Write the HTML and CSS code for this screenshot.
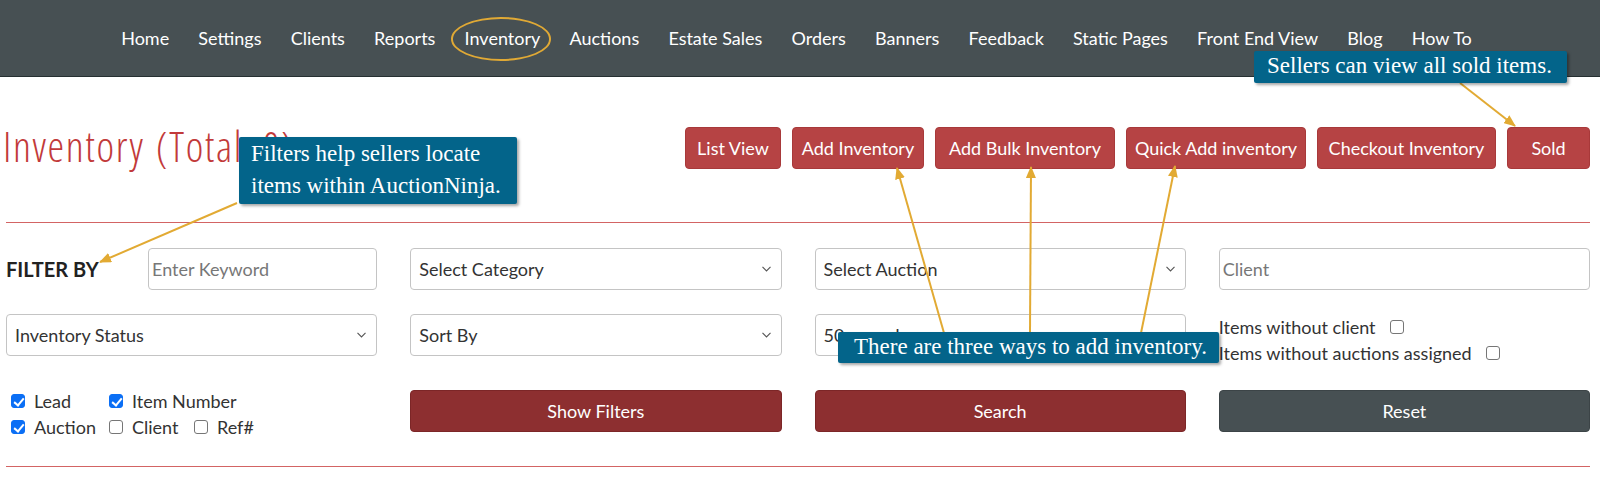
FILE: index.html
```html
<!DOCTYPE html>
<html lang="en">
<head>
<meta charset="utf-8">
<title>Inventory</title>
<link rel="stylesheet" href="styles.css">
</head>
<body>
<div class="page">
  <nav class="topnav">
    <a class="navlink">Home</a>
    <a class="navlink">Settings</a>
    <a class="navlink">Clients</a>
    <a class="navlink">Reports</a>
    <a class="navlink circled">Inventory</a>
    <a class="navlink">Auctions</a>
    <a class="navlink">Estate Sales</a>
    <a class="navlink">Orders</a>
    <a class="navlink">Banners</a>
    <a class="navlink">Feedback</a>
    <a class="navlink">Static Pages</a>
    <a class="navlink">Front End View</a>
    <a class="navlink">Blog</a>
    <a class="navlink">How To</a>
  </nav>

  <main class="content">
    <header class="page-head">
      <h1 class="title">Inventory <span class="total">(Total: 0)</span></h1>
      <div class="actions">
        <button class="btn btn-red btn-list">List View</button>
        <button class="btn btn-red btn-add">Add Inventory</button>
        <button class="btn btn-red btn-wide">Add Bulk Inventory</button>
        <button class="btn btn-red btn-wide">Quick Add inventory</button>
        <button class="btn btn-red btn-checkout">Checkout Inventory</button>
        <button class="btn btn-red btn-sold">Sold</button>
      </div>
    </header>
    <hr class="divider">

    <section class="filters">
      <div class="frow">
        <div class="cell-label">
          <span class="filter-label">FILTER BY</span>
          <input class="field field-input" type="text" placeholder="Enter Keyword">
        </div>
        <div class="select-wrap">
          <select class="field field-select"><option>Select Category</option></select>
          <svg class="chev" viewBox="0 0 9 6"><path d="M0.5 0.8 L4.5 5 L8.5 0.8" fill="none" stroke="#555" stroke-width="1.1"/></svg>
        </div>
        <div class="select-wrap">
          <select class="field field-select"><option>Select Auction</option></select>
          <svg class="chev" viewBox="0 0 9 6"><path d="M0.5 0.8 L4.5 5 L8.5 0.8" fill="none" stroke="#555" stroke-width="1.1"/></svg>
        </div>
        <input class="field field-input" type="text" placeholder="Client">
      </div>

      <div class="frow">
        <div class="select-wrap">
          <select class="field field-select"><option>Inventory Status</option></select>
          <svg class="chev" viewBox="0 0 9 6"><path d="M0.5 0.8 L4.5 5 L8.5 0.8" fill="none" stroke="#555" stroke-width="1.1"/></svg>
        </div>
        <div class="select-wrap">
          <select class="field field-select"><option>Sort By</option></select>
          <svg class="chev" viewBox="0 0 9 6"><path d="M0.5 0.8 L4.5 5 L8.5 0.8" fill="none" stroke="#555" stroke-width="1.1"/></svg>
        </div>
        <div class="select-wrap">
          <select class="field field-select"><option>50 records</option></select>
          <svg class="chev" viewBox="0 0 9 6"><path d="M0.5 0.8 L4.5 5 L8.5 0.8" fill="none" stroke="#555" stroke-width="1.1"/></svg>
        </div>
        <div class="toggles">
          <label class="toggle">Items without client <input class="check" type="checkbox"></label>
          <label class="toggle">Items without auctions assigned <input class="check" type="checkbox"></label>
        </div>
      </div>

      <div class="frow frow-actions">
        <div class="checks">
          <label class="check-item"><input class="check" type="checkbox" checked>Lead</label>
          <label class="check-item span2"><input class="check" type="checkbox" checked>Item Number</label>
          <label class="check-item"><input class="check" type="checkbox" checked>Auction</label>
          <label class="check-item"><input class="check" type="checkbox">Client</label>
          <label class="check-item"><input class="check" type="checkbox">Ref#</label>
        </div>
        <button class="btn btn-block btn-maroon">Show Filters</button>
        <button class="btn btn-block btn-maroon">Search</button>
        <button class="btn btn-block btn-slate">Reset</button>
      </div>
    </section>
    <hr class="divider">
  </main>

  <svg class="arrows" width="1600" height="488" viewBox="0 0 1600 488">
    <defs>
      <marker id="ah" markerWidth="12" markerHeight="10" refX="11" refY="5" orient="auto" markerUnits="userSpaceOnUse">
        <path d="M0,0 L12,5 L0,10 z" fill="#e2aa33"/>
      </marker>
    </defs>
    <g stroke="#e2aa33" stroke-width="2" fill="none" marker-end="url(#ah)">
      <line x1="1460" y1="83" x2="1515" y2="126"/>
      <line x1="237" y1="203" x2="100" y2="262"/>
      <line x1="944" y1="333" x2="897" y2="168"/>
      <line x1="1030" y1="333" x2="1031" y2="167"/>
      <line x1="1141" y1="333" x2="1175" y2="166"/>
    </g>
  </svg>

  <div class="callout callout-sold">Sellers can view all sold items.</div>
  <div class="callout callout-filters">Filters help sellers locate<br>items within AuctionNinja.</div>
  <div class="callout callout-add">There are three ways to add inventory.</div>
</div>
</body>
</html>
```

FILE: styles.css
```css
* { box-sizing: border-box; }

html, body {
  margin: 0;
  padding: 0;
  background: #fff;
}

body {
  font-family: Lato, "Open Sans", sans-serif;
  font-size: 18px;
  color: #333;
  width: 1600px;
  height: 488px;
  overflow: hidden;
}

.page {
  position: relative;
  width: 1600px;
  height: 488px;
}

/* ---------- top navigation ---------- */
.topnav {
  height: 77px;
  background: #475053;
  border-bottom: 1px solid #263032;
  display: flex;
  justify-content: center;
  align-items: center;
  gap: 29.2px;
  padding-right: 7px;
}

.navlink {
  color: #fff;
  text-decoration: none;
  font-size: 18px;
  line-height: 22px;
}

.circled { position: relative; }

.circled::after {
  content: "";
  position: absolute;
  left: -14px;
  right: -11px;
  top: -10px;
  bottom: -12px;
  border: 2.5px solid #e0a935;
  border-radius: 50%;
}

/* ---------- content ---------- */
.content {
  padding: 0 10px 0 6px;
}

.page-head {
  display: flex;
  justify-content: space-between;
  align-items: flex-start;
  height: 145px;
  padding-top: 50px;
}

.title {
  margin: -5px 0 0 -3px;
  font-family: "Open Sans", sans-serif;
  font-weight: 300;
  font-stretch: 75%;
  font-size: 42px;
  letter-spacing: 1.6px;
  line-height: 48px;
  color: #c23a3a;
  white-space: nowrap;
}

.total { margin-left: 2px; }

.actions {
  display: flex;
  gap: 11px;
}

.btn {
  height: 42px;
  border: 1px solid #a8393a;
  border-radius: 4px;
  background: #b64344;
  color: #fff;
  font-family: inherit;
  font-size: 18px;
  padding: 0;
  white-space: nowrap;
}

.btn-list { width: 96px; }
.btn-add { width: 132px; }
.btn-wide { width: 180px; }
.btn-checkout { width: 179px; }
.btn-sold { width: 83px; }

.divider {
  margin: 0;
  border: 0;
  border-top: 1px solid #d36464;
}

/* ---------- filters ---------- */
.filters {
  padding-top: 25px;
  display: flex;
  flex-direction: column;
}

.frow {
  display: grid;
  grid-template-columns: repeat(4, 1fr);
  grid-template-rows: 42px;
  column-gap: 33px;
  height: 42px;
  margin-bottom: 24px;
}

.frow-actions {
  margin-top: 10px;
  margin-bottom: 34px;
}

.cell-label {
  display: flex;
  align-items: center;
}

.filter-label {
  width: 142px;
  flex: none;
  font-weight: 700;
  font-size: 20px;
  color: #222;
}

.field {
  width: 100%;
  height: 42px;
  border: 1px solid #c4c4c4;
  border-radius: 4px;
  background: #fff;
  font-family: inherit;
  font-size: 18px;
  color: #333;
  margin: 0;
}

.field-input { padding: 0 3px; }
.field-input::placeholder { color: #777; }

.field-select {
  -webkit-appearance: none;
  appearance: none;
  padding: 0 28px 0 8px;
}

.select-wrap {
  position: relative;
  height: 42px;
}

.chev {
  position: absolute;
  right: 11px;
  top: 50%;
  width: 9px;
  height: 6px;
  margin-top: -3px;
  pointer-events: none;
}

.toggles {
  display: flex;
  flex-direction: column;
  line-height: 26px;
}

.toggle {
  display: flex;
  align-items: center;
  gap: 14px;
  white-space: nowrap;
}

.check {
  -webkit-appearance: none;
  appearance: none;
  width: 14px;
  height: 14px;
  margin: 0;
  border: 1px solid #767676;
  border-radius: 3px;
  background: #fff;
  position: relative;
  flex: none;
}

.check:checked {
  background: #0b6ff5;
  border-color: #0b6ff5;
}

.check:checked::after {
  content: "";
  position: absolute;
  left: 3.5px;
  top: 0.5px;
  width: 4px;
  height: 8px;
  border: solid #fff;
  border-width: 0 2px 2px 0;
  transform: rotate(40deg);
}

.checks {
  display: grid;
  grid-template-columns: 98px 85px auto;
  grid-auto-rows: 26px;
  margin: -2px 0 0 5px;
}

.check-item {
  display: flex;
  align-items: center;
  gap: 9px;
  white-space: nowrap;
}

.span2 { grid-column: span 2; }

.btn-block { width: 100%; }

.btn-maroon {
  background: #8d2f30;
  border-color: #7c2627;
}

.btn-slate {
  background: #475053;
  border-color: #3c4447;
}

/* ---------- annotations ---------- */
.arrows {
  position: absolute;
  left: 0;
  top: 0;
  pointer-events: none;
}

.callout {
  position: absolute;
  background: #03648a;
  color: #fff;
  font-family: "Liberation Serif", "Times New Roman", serif;
  font-size: 23px;
  border-radius: 2px;
  box-shadow: 2px 2px 3px rgba(0, 0, 0, 0.35);
  white-space: nowrap;
}

.callout-sold {
  left: 1254px;
  top: 51px;
  width: 313px;
  height: 32px;
  line-height: 30px;
  padding-left: 13px;
}

.callout-filters {
  left: 239px;
  top: 137px;
  width: 278px;
  height: 67px;
  line-height: 32px;
  padding: 1px 10px 0 12px;
}

.callout-add {
  left: 838px;
  top: 332px;
  width: 381px;
  height: 31px;
  line-height: 29px;
  padding-left: 16px;
}
```
